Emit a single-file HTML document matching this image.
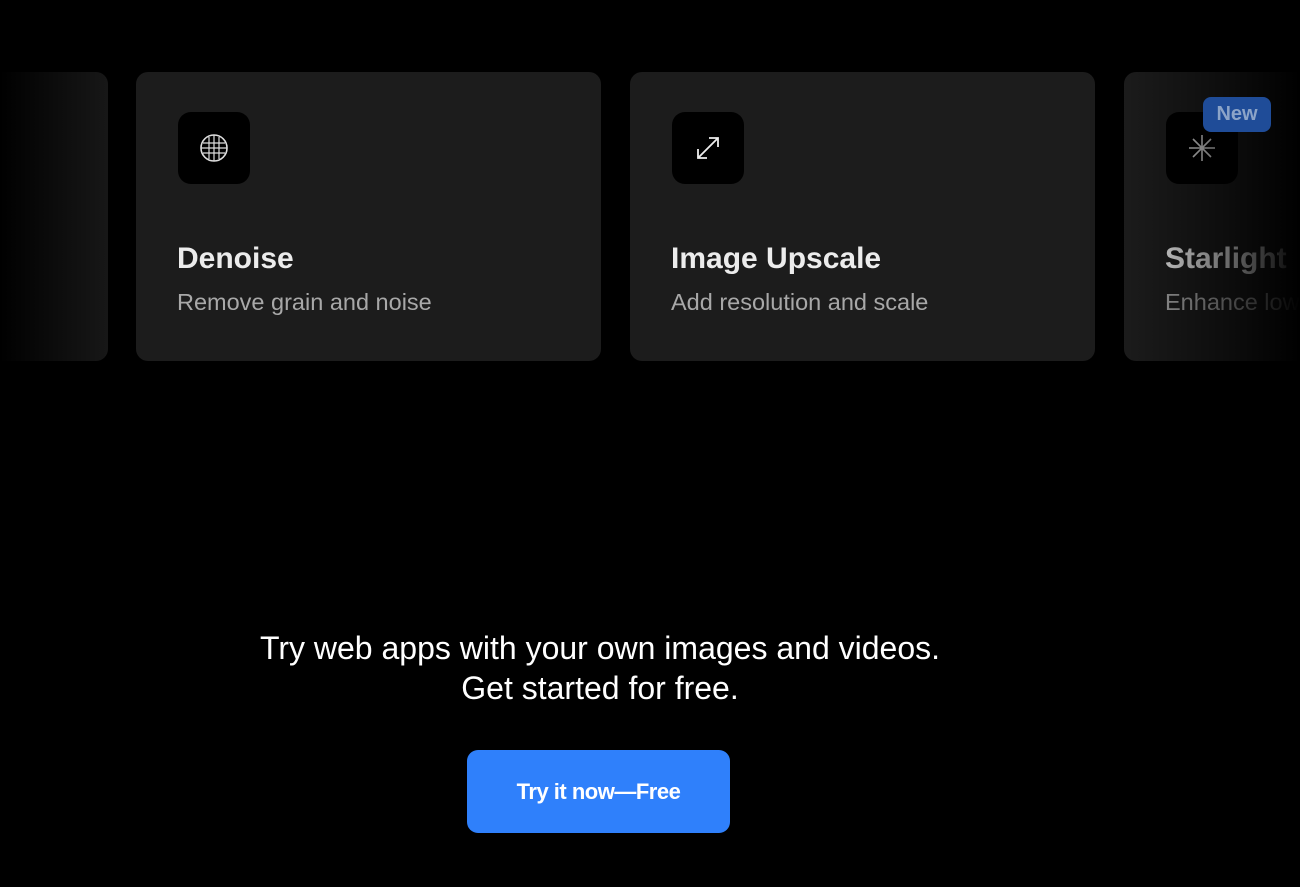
<!DOCTYPE html>
<html><head><style>
html,body{margin:0;padding:0;background:#000;width:1300px;height:887px;overflow:hidden;font-family:"Liberation Sans",sans-serif;}
.card{position:absolute;top:72px;width:465px;height:289px;background:#1c1c1c;border-radius:12px;}
.icon{position:absolute;left:42px;top:40px;width:72px;height:72px;background:#000;border-radius:13px;display:flex;align-items:center;justify-content:center;}
.t{position:absolute;left:41px;top:170px;font-size:30px;font-weight:bold;color:#ececec;letter-spacing:0;}
.s{position:absolute;left:41px;top:217px;font-size:23.5px;color:#a8a8a8;letter-spacing:0;}
.fadeL{position:absolute;left:0;top:60px;width:130px;height:320px;background:linear-gradient(to right,#000 0%,rgba(0,0,0,0.5) 50%,rgba(0,0,0,0) 100%);}
.fadeR{position:absolute;right:0;top:60px;width:180px;height:320px;background:linear-gradient(to left,#000 0%,rgba(0,0,0,0.55) 40%,rgba(0,0,0,0) 100%);}
.new{position:absolute;left:1203px;top:97px;width:68px;height:35px;background:#1f4c98;border-radius:8px;color:#8ca4c8;font-weight:bold;font-size:20px;text-align:center;line-height:35px;}
.h{position:absolute;left:0;width:1200px;text-align:center;color:#fff;font-size:32px;letter-spacing:0;}
.btn{position:absolute;left:467px;top:750px;width:263px;height:83px;background:#2f80fb;border-radius:11px;color:#fff;font-weight:bold;font-size:22px;text-align:center;line-height:83px;letter-spacing:-0.5px;}
</style></head><body>
<div class="card" style="left:-357px"></div>
<div class="card" style="left:136px">
 <div class="icon"><svg width="32" height="32" viewBox="0 0 32 32" fill="none" stroke="#ddd" stroke-width="1.6"><circle cx="16" cy="16" r="13"/><path d="M11 5v22M16 3v26M21 5v22M5 11h22M3 16h26M5 21h22" stroke-width="1.2"/></svg></div>
 <div class="t">Denoise</div><div class="s">Remove grain and noise</div>
</div>
<div class="card" style="left:630px">
 <div class="icon"><svg width="32" height="32" viewBox="0 0 32 32" fill="none" stroke="#eee" stroke-width="1.8"><path d="M6 26L26 6M17 6h9v9M6 17v9h9"/></svg></div>
 <div class="t">Image Upscale</div><div class="s">Add resolution and scale</div>
</div>
<div class="card" style="left:1124px">
 <div class="icon"><svg width="32" height="32" viewBox="0 0 32 32" fill="none" stroke="#ddd" stroke-width="1.6"><path d="M16 3v26M3 16h26M7 7l18 18M25 7L7 25"/></svg></div>
 <div class="t">Starlight</div><div class="s">Enhance low light</div>
</div>
<div class="fadeL"></div>
<div class="fadeR"></div>
<div class="new">New</div>
<div class="h" style="top:630px">Try web apps with your own images and videos.</div>
<div class="h" style="top:670px">Get started for free.</div>
<div class="btn">Try it now—Free</div>
</body></html>
